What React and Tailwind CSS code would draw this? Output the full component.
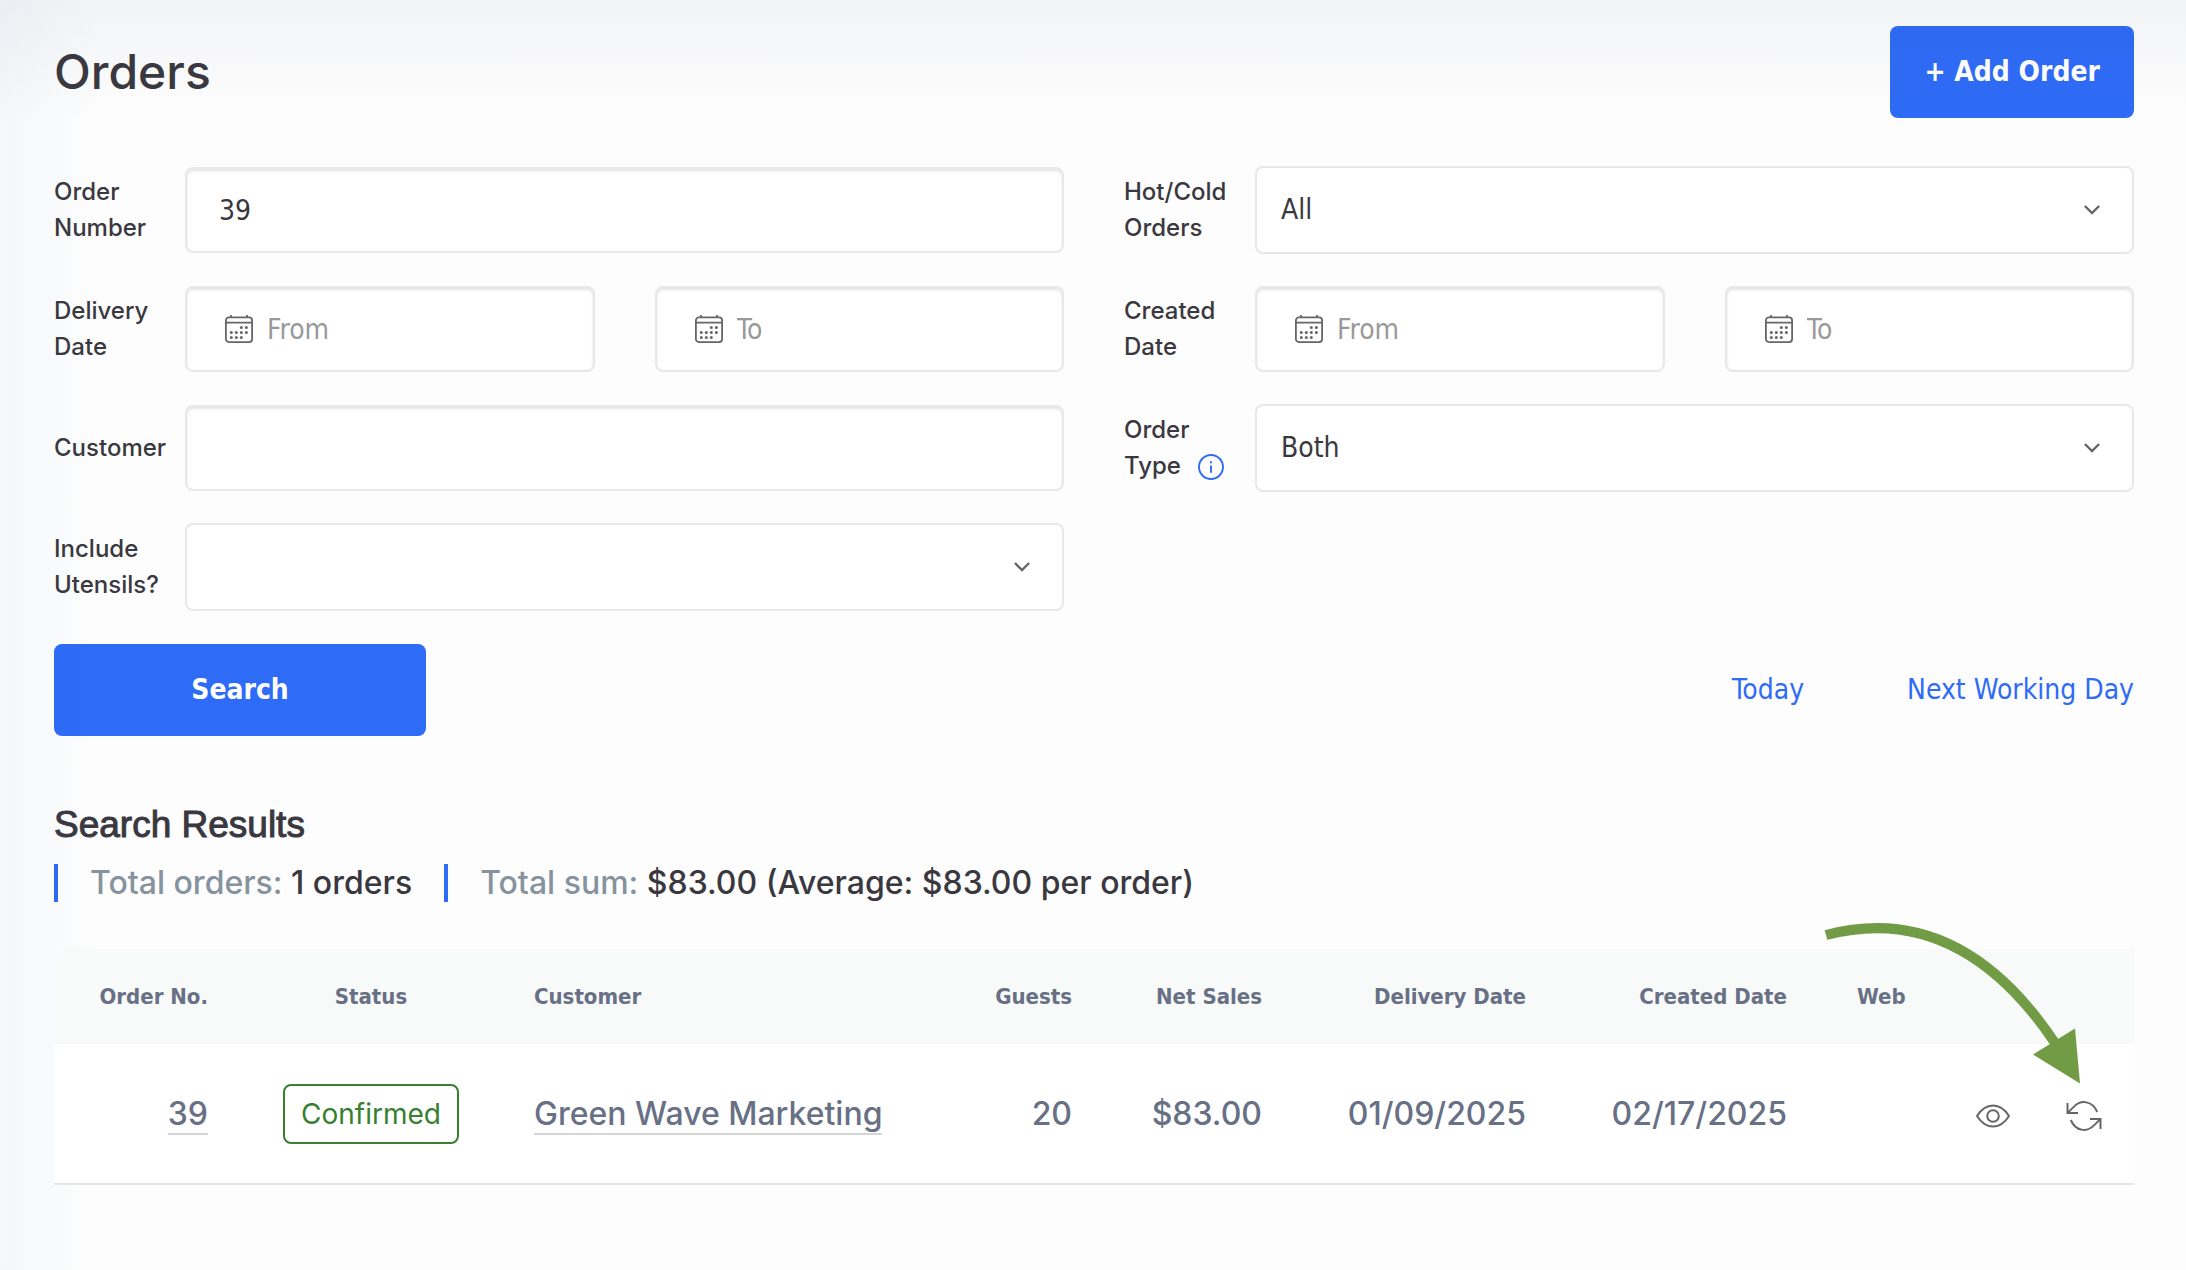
import { useState } from "react";

const inputClass =
  "block h-[86px] w-full rounded-lg border-2 border-[#e8e8e8] bg-white font-['DejaVu_Sans_Condensed','Noto_Sans',sans-serif] text-[28px] text-[#3a383f] shadow-[inset_0_2px_3px_#e4e4e4] outline-none placeholder:text-[#999]";

function CalendarIcon() {
  return (
    <svg viewBox="0 0 28 28" className="pointer-events-none absolute top-[29px] left-[40px] size-7" fill="none" stroke="#666" strokeWidth="1.8">
      <rect x="0.9" y="2.4" width="26.2" height="24.7" rx="3" />
      <path d="M1 7.6h26M6 0v2.4M22 0v2.4" />
      <g fill="#666" stroke="none">
        <circle cx="16.3" cy="12.4" r="1.5" />
        <circle cx="21.4" cy="12.4" r="1.5" />
        <circle cx="6.3" cy="17.4" r="1.5" />
        <circle cx="11.3" cy="17.4" r="1.5" />
        <circle cx="16.3" cy="17.4" r="1.5" />
        <circle cx="21.4" cy="17.4" r="1.5" />
        <circle cx="6.3" cy="22.4" r="1.5" />
        <circle cx="11.3" cy="22.4" r="1.5" />
        <circle cx="16.3" cy="22.4" r="1.5" />
      </g>
    </svg>
  );
}

function InfoIcon() {
  return (
    <svg viewBox="0 0 26 26" className="ml-[17px] inline-block size-[26px] align-[-6px]" fill="none" stroke="#2e6bf6" strokeWidth="1.9">
      <circle cx="13" cy="13" r="12" />
      <path d="M13 11.4v7.4M13 7.2v2" />
    </svg>
  );
}

function EyeIcon() {
  return (
    <svg viewBox="0 0 36 32" className="h-8 w-9" fill="none" stroke="#666" strokeWidth="2" strokeLinejoin="round">
      <path d="M2 16C6.5 8.8 12 5.500 18 5.500S29.500 8.800 34 16c-4.500 7.200-10 10.500-16 10.500S6.500 23.200 2 16z" />
      <circle cx="18" cy="16" r="5.800" />
    </svg>
  );
}

function RepeatIcon() {
  return (
    <svg viewBox="0 0 36 32" className="h-8 w-9" fill="none" stroke="#666" strokeWidth="2">
      <path d="M1.500 3v10h10.500M1.600 12.900L8 6.600C15 -.5 26.500 .6 31.200 12" />
      <path d="M34.500 29V19H24M34.400 19.100L28 25.400C21 32.500 9.500 31.400 4.800 20" />
    </svg>
  );
}

function Row({ label, id, icon, children }) {
  return (
    <div className="flex min-h-[88px] items-center">
      <label htmlFor={id} className="w-[131px] shrink-0 pr-3 text-2xl leading-9 font-medium">
        {label}
        {icon}
      </label>
      <div className="min-w-0 flex-1">{children}</div>
    </div>
  );
}

function Select({ id, options }) {
  const [value, setValue] = useState(options[0]);

  return (
    <div className="relative">
      <select
        id={id}
        value={value}
        onChange={(e) => setValue(e.target.value)}
        className="block h-[88px] w-full appearance-none rounded-lg border-2 border-[#e8e8e8] bg-white px-6 font-['DejaVu_Sans_Condensed','Noto_Sans',sans-serif] text-[28px] text-[#3a383f] outline-none"
      >
        {options.map((option) => (
          <option key={option}>{option}</option>
        ))}
      </select>
      <svg viewBox="0 0 16 10" className="pointer-events-none absolute top-[39px] right-[34px] h-[10px] w-4" fill="none" stroke="#666" strokeWidth="2.4">
        <path d="M0.900 1l7.100 7 7.100-7" />
      </svg>
    </div>
  );
}

function DateRange({ id, name }) {
  return (
    <div className="grid grid-cols-2 gap-[60px]">
      <div className="relative">
        <CalendarIcon />
        <input id={id} type="text" placeholder="From" className={`${inputClass} pl-20`} />
      </div>
      <div className="relative">
        <CalendarIcon />
        <input type="text" placeholder="To" aria-label={`${name} to`} className={`${inputClass} pl-20`} />
      </div>
    </div>
  );
}

const orders = [
  {
    id: 39,
    status: "Confirmed",
    customer: "Green Wave Marketing",
    guests: 20,
    netSales: "$83.00",
    deliveryDate: "01/09/2025",
    createdDate: "02/17/2025",
  },
];

export default function App() {
  const [orderNumber, setOrderNumber] = useState("39");
  const [customer, setCustomer] = useState("");

  return (
    <div className="relative min-h-screen overflow-hidden bg-[#fdfdfd] pt-[26px] pr-[52px] pb-20 pl-[54px] font-[Inter,sans-serif] text-[#3a383f]">
      <div className="pointer-events-none absolute inset-x-0 top-0 h-[120px] bg-linear-to-b from-[#2a3a68]/5 to-transparent" />
      <div className="pointer-events-none absolute inset-y-0 left-0 w-[100px] bg-linear-to-r from-[#2a60a8]/4 to-transparent" />

      <header className="flex items-center justify-between">
        <h1 className="text-5xl font-medium">Orders</h1>
        <button className="h-[92px] rounded-lg bg-[#2e6bf6] px-[34px] font-['DejaVu_Sans_Condensed','Noto_Sans',sans-serif] text-[28px] font-bold text-white">
          + Add Order
        </button>
      </header>

      <form onSubmit={(e) => e.preventDefault()}>
        <div className="mt-12 grid grid-cols-2 gap-x-[60px]">
          <div className="space-y-[31px]">
            <Row label="Order Number" id="order-number">
              <input
                id="order-number"
                type="text"
                value={orderNumber}
                onChange={(e) => setOrderNumber(e.target.value)}
                className={`${inputClass} px-8`}
              />
            </Row>
            <Row label="Delivery Date" id="delivery-from">
              <DateRange id="delivery-from" name="Delivery date" />
            </Row>
            <Row label="Customer" id="customer">
              <input
                id="customer"
                type="text"
                value={customer}
                onChange={(e) => setCustomer(e.target.value)}
                className={`${inputClass} px-8`}
              />
            </Row>
            <Row label="Include Utensils?" id="utensils">
              <Select id="utensils" options={["", "Yes", "No"]} />
            </Row>
          </div>
          <div className="space-y-[31px]">
            <Row label="Hot/Cold Orders" id="hot-cold">
              <Select id="hot-cold" options={["All", "Hot", "Cold"]} />
            </Row>
            <Row label="Created Date" id="created-from">
              <DateRange id="created-from" name="Created date" />
            </Row>
            <Row label="Order Type" id="order-type" icon={<InfoIcon />}>
              <Select id="order-type" options={["Both", "Delivery", "Pickup"]} />
            </Row>
          </div>
        </div>

        <div className="mt-[33px] flex items-center justify-between font-['DejaVu_Sans_Condensed','Noto_Sans',sans-serif] text-[28px]">
          <button type="submit" className="h-[92px] w-[372px] rounded-lg bg-[#2e6bf6] font-bold text-white">
            Search
          </button>
          <div className="flex gap-[103px] text-[#2e6bf6]">
            <a href="#today">Today</a>
            <a href="#next-working-day">Next Working Day</a>
          </div>
        </div>
      </form>

      <h2 className="mt-[69px] font-['Liberation_Sans',sans-serif] text-[37px] leading-10 [-webkit-text-stroke:1px_#3a383f]">
        Search Results
      </h2>
      <div className="mt-[19px] flex gap-8 text-[32px] leading-[38px] font-medium">
        <p className="border-l-4 border-[#2e6bf6] pl-8">
          <span className="text-[#86939e]">Total orders:</span> 1 orders
        </p>
        <p className="border-l-4 border-[#2e6bf6] pl-8">
          <span className="text-[#86939e]">Total sum:</span> $83.00 (Average: $83.00 per order)
        </p>
      </div>

      <div className="relative mt-[47px]">
        <table className="w-full table-fixed text-[#687085]">
          <thead>
            <tr className="h-[95px] bg-[#f8faf9] font-['DejaVu_Sans_Condensed','Noto_Sans',sans-serif] text-[22px] *:px-[35px] *:font-bold *:whitespace-nowrap">
              <th className="w-[189px] text-right">Order No.</th>
              <th className="w-[256px] text-center">Status</th>
              <th className="text-left">Customer</th>
              <th className="w-[150px] text-right">Guests</th>
              <th className="w-[190px] text-right">Net Sales</th>
              <th className="w-[264px] text-right">Delivery Date</th>
              <th className="w-[261px] text-right">Created Date</th>
              <th className="w-[118px] text-left">Web</th>
              <th className="w-[194px]" aria-label="Actions"></th>
            </tr>
          </thead>
          <tbody>
            {orders.map((order) => (
              <tr key={order.id} className="h-[140px] border-b-2 border-[#e6e6e6] bg-white text-[32px] font-medium *:px-[35px] *:whitespace-nowrap">
                <td className="text-right">
                  <a href={`#order-${order.id}`} className="border-b-2 border-[#d6d6d6]">{order.id}</a>
                </td>
                <td>
                  <span className="mx-[5px] flex h-[60px] items-center justify-center rounded-lg border-2 border-[#37802f] text-[28px] font-normal text-[#37802f]">
                    {order.status}
                  </span>
                </td>
                <td>
                  <a href="#customer" className="border-b-2 border-[#d6d6d6]">{order.customer}</a>
                </td>
                <td className="text-right">{order.guests}</td>
                <td className="text-right">{order.netSales}</td>
                <td className="text-right">{order.deliveryDate}</td>
                <td className="text-right">{order.createdDate}</td>
                <td></td>
                <td>
                  <div className="flex gap-[55px] pt-1">
                    <button className="shrink-0" aria-label="View order"><EyeIcon /></button>
                    <button className="shrink-0" aria-label="Repeat order"><RepeatIcon /></button>
                  </div>
                </td>
              </tr>
            ))}
          </tbody>
        </table>

        {/* callout arrow pointing at the repeat button */}
        <svg viewBox="0 0 270 170" className="pointer-events-none absolute -top-[30px] right-[44px] h-[170px] w-[270px]">
          <path d="M6 16C90 -6 168 24 235 124" fill="none" stroke="#729b45" strokeWidth="10" />
          <path d="M255 109.500L213 135.500L260 164.500z" fill="#729b45" />
        </svg>
      </div>
    </div>
  );
}
